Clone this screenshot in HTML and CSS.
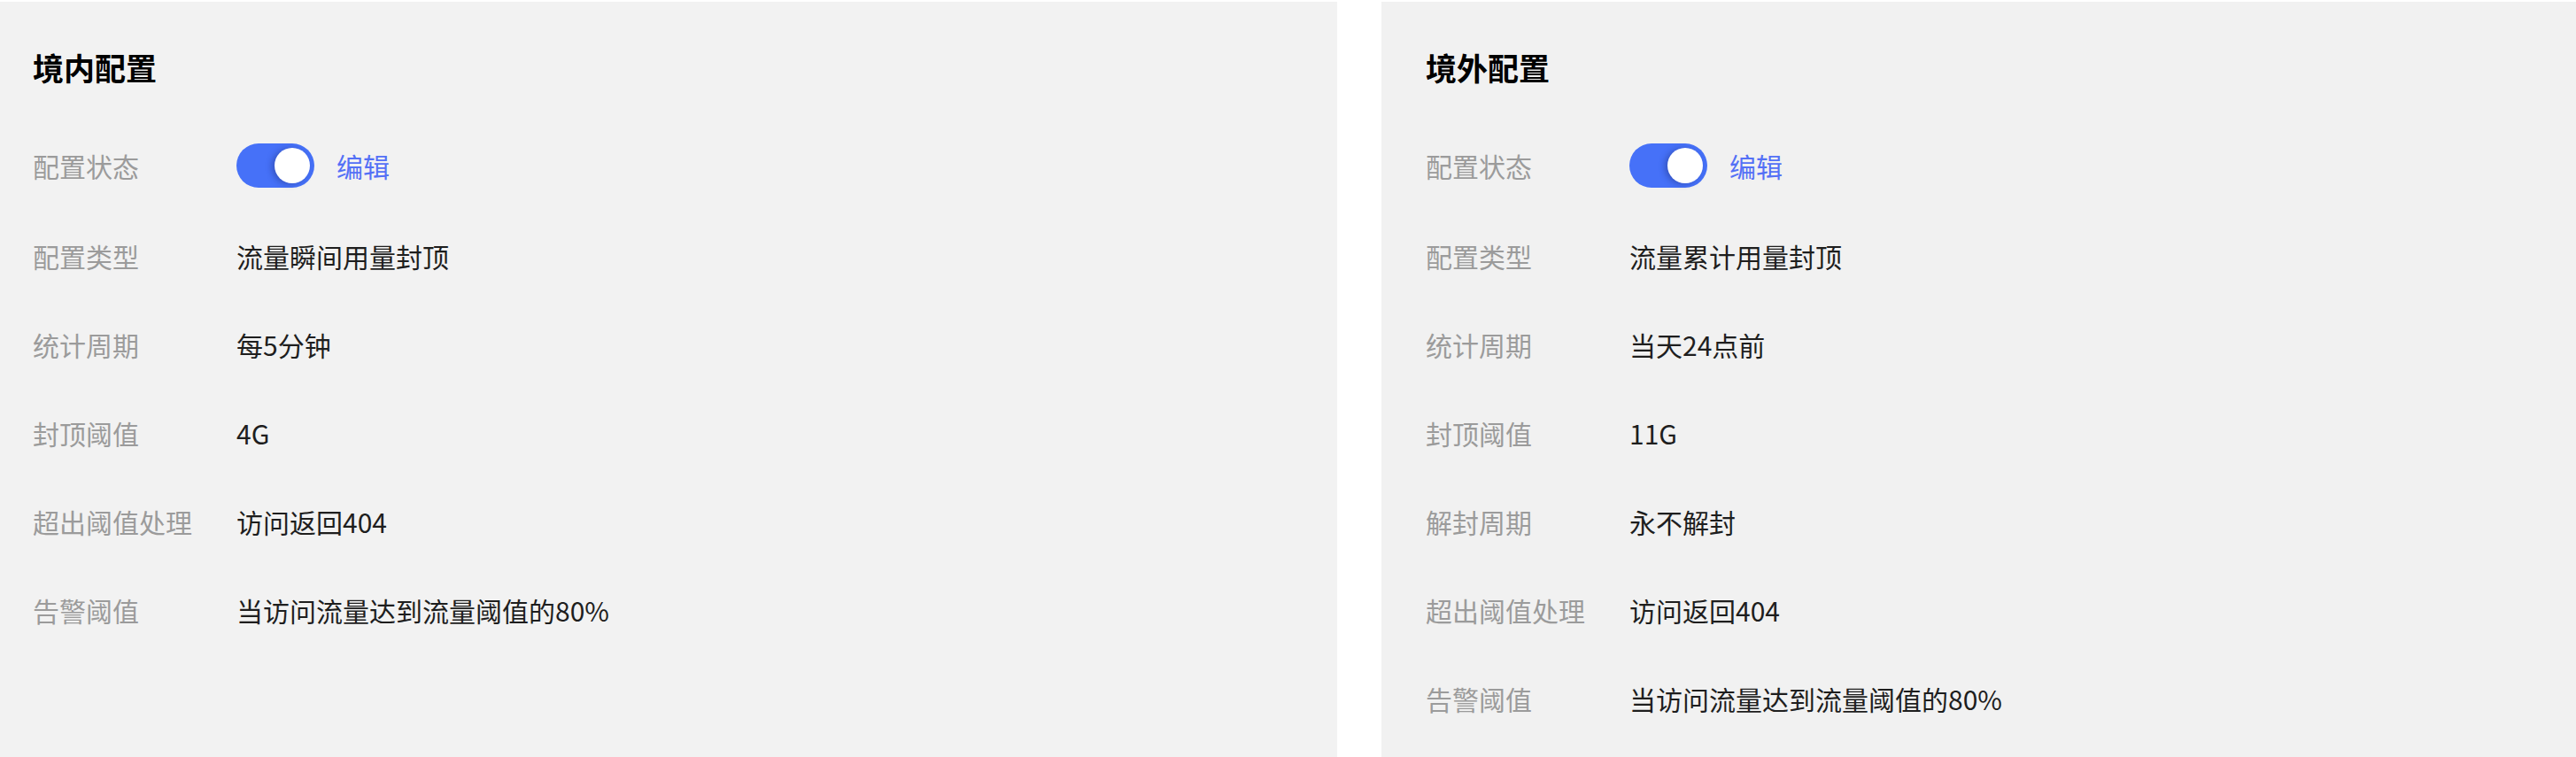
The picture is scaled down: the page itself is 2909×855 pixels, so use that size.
FILE: index.html
```html
<!DOCTYPE html>
<html lang="zh-CN">
<head>
    <meta charset="UTF-8">
    <meta name="viewport" content="width=device-width, initial-scale=1.0">
    <title>流量封顶配置</title>
    <link rel="stylesheet" href="styles.css">
</head>
<body>

    <div class="cap-config-page">

        <!-- 境内配置 -->
        <section class="cap-config-panel cap-config-panel-domestic">
            <h2 class="cap-config-title">境内配置</h2>
            <div class="cap-config-row cap-config-row-switch">
                <span class="cap-config-label">配置状态</span>
                <div class="cap-config-value">
                    <span class="cap-config-switch cap-config-switch-on"><span class="cap-config-switch-knob"></span></span>
                    <a href="#" class="cap-config-edit">编辑</a>
                </div>
            </div>
            <div class="cap-config-row">
                <span class="cap-config-label">配置类型</span>
                <span class="cap-config-value">流量瞬间用量封顶</span>
            </div>
            <div class="cap-config-row">
                <span class="cap-config-label">统计周期</span>
                <span class="cap-config-value">每5分钟</span>
            </div>
            <div class="cap-config-row">
                <span class="cap-config-label">封顶阈值</span>
                <span class="cap-config-value">4G</span>
            </div>
            <div class="cap-config-row">
                <span class="cap-config-label">超出阈值处理</span>
                <span class="cap-config-value">访问返回404</span>
            </div>
            <div class="cap-config-row">
                <span class="cap-config-label">告警阈值</span>
                <span class="cap-config-value">当访问流量达到流量阈值的80%</span>
            </div>
        </section>

        <!-- 境外配置 -->
        <section class="cap-config-panel cap-config-panel-overseas">
            <h2 class="cap-config-title">境外配置</h2>
            <div class="cap-config-row cap-config-row-switch">
                <span class="cap-config-label">配置状态</span>
                <div class="cap-config-value">
                    <span class="cap-config-switch cap-config-switch-on"><span class="cap-config-switch-knob"></span></span>
                    <a href="#" class="cap-config-edit">编辑</a>
                </div>
            </div>
            <div class="cap-config-row">
                <span class="cap-config-label">配置类型</span>
                <span class="cap-config-value">流量累计用量封顶</span>
            </div>
            <div class="cap-config-row">
                <span class="cap-config-label">统计周期</span>
                <span class="cap-config-value">当天24点前</span>
            </div>
            <div class="cap-config-row">
                <span class="cap-config-label">封顶阈值</span>
                <span class="cap-config-value">11G</span>
            </div>
            <div class="cap-config-row">
                <span class="cap-config-label">解封周期</span>
                <span class="cap-config-value">永不解封</span>
            </div>
            <div class="cap-config-row">
                <span class="cap-config-label">超出阈值处理</span>
                <span class="cap-config-value">访问返回404</span>
            </div>
            <div class="cap-config-row">
                <span class="cap-config-label">告警阈值</span>
                <span class="cap-config-value">当访问流量达到流量阈值的80%</span>
            </div>
        </section>

    </div>

    <script>
// Toggle the switch on click
const switches = document.querySelectorAll('.cap-config-switch');
switches.forEach(sw => {
    sw.onclick = function() {
        this.classList.toggle('cap-config-switch-on');
    };
});
    </script>
</body>
</html>
```

FILE: styles.css
```css
/* Page */
body {
    margin: 0;
    background-color: #fff;
    font-family: 'Noto Sans CJK SC', 'Noto Sans', sans-serif;
}

.cap-config-page {
    display: flex;
    gap: 50px;
    height: 100vh;
    padding-top: 2px;
    box-sizing: border-box;
}

/* Panels */
.cap-config-panel {
    padding-top: 49px;
    box-sizing: border-box;
}

.cap-config-panel-domestic {
    width: 1510px;
    padding-left: 37px;
    background-color: #f2f2f2;
}

.cap-config-panel-overseas {
    flex: 1;
    padding-left: 50px;
    background-color: #f1f1f1;
}

/* Title */
.cap-config-title {
    margin: 0 0 61px;
    font-size: 35px;
    line-height: 50px;
    font-weight: bold;
    color: #000;
}

/* Rows */
.cap-config-row {
    display: flex;
    align-items: center;
    height: 46px;
    margin-bottom: 54px;
    font-size: 30px;
}

.cap-config-row-switch {
    height: 50px;
    margin-bottom: 54px;
}

.cap-config-label {
    width: 230px;
    flex-shrink: 0;
    color: #9b9b9b;
}

.cap-config-value {
    display: flex;
    align-items: center;
    color: #1e1e1e;
}

/* Switch */
.cap-config-switch {
    display: flex;
    align-items: center;
    justify-content: flex-start;
    width: 88px;
    height: 50px;
    padding: 0 5px;
    box-sizing: border-box;
    border-radius: 25px;
    background-color: #c9c9c9;
    cursor: pointer;
}

.cap-config-switch-on {
    justify-content: flex-end;
    background-color: #4671f8;
}

.cap-config-switch-knob {
    width: 40px;
    height: 40px;
    border-radius: 50%;
    background-color: #fff;
    box-shadow: -3px 1px 7px rgba(20, 30, 90, 0.35);
}

/* Edit link */
.cap-config-edit {
    margin-left: 25px;
    color: #5470f6;
    text-decoration: none;
}
```
